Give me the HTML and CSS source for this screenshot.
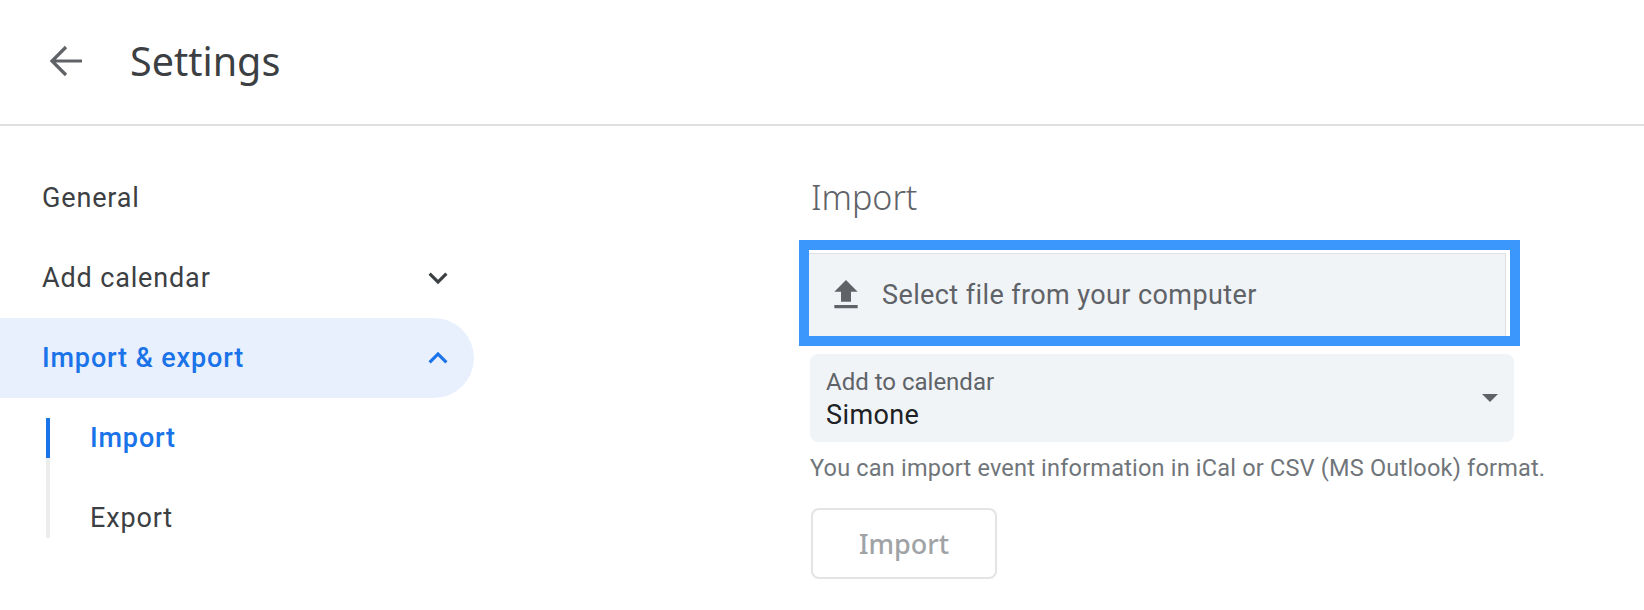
FILE: index.html
```html
<!DOCTYPE html>
<html lang="en">
<head>
<meta charset="utf-8">
<title>Settings</title>
<link rel="stylesheet" href="styles.css">
</head>
<body>
<header class="topbar">
  <svg class="back" viewBox="0 0 36 36"><path d="M34 18H4M18 4 4 18l14 14"/></svg>
  <h1 class="title">Settings</h1>
</header>
<main class="layout">
  <nav class="nav">
    <div class="nav-item">General</div>
    <div class="nav-item">Add calendar
      <svg class="chev" viewBox="0 0 24 24"><path d="M7.41 8.59 12 13.17l4.59-4.58L18 10l-6 6-6-6z"/></svg>
    </div>
    <div class="nav-item active">Import &amp; export
      <svg class="chev" viewBox="0 0 24 24"><path d="M7.41 15.41 12 10.83l4.59 4.58L18 14l-6-6-6 6z"/></svg>
    </div>
    <div class="sub">
      <div class="sub-item current">Import</div>
      <div class="sub-item">Export</div>
    </div>
  </nav>
  <section class="content">
    <h2 class="heading">Import</h2>
    <div class="highlight">
      <div class="file">
        <svg class="upload" viewBox="0 0 24 24"><path d="M9 16h6v-6h4l-7-7-7 7h4v6zm-4 2h14v2H5v-2z"/></svg>
        <span>Select file from your computer</span>
      </div>
    </div>
    <div class="select">
      <div class="select-text">
        <div class="select-label">Add to calendar</div>
        <div class="select-value">Simone</div>
      </div>
      <span class="caret"></span>
    </div>
    <p class="help">You can import event information in iCal or CSV (MS Outlook) format.</p>
    <button class="btn" type="button" disabled>Import</button>
  </section>
</main>
</body>
</html>
```
FILE: styles.css
```css
* { box-sizing: border-box; }
html, body { margin: 0; height: 100%; background: #fff; overflow: hidden; }
body { font-family: Roboto, "Liberation Sans", sans-serif; color: #3c4043; }
.topbar { display: flex; align-items: center; height: 126px; border-bottom: 2px solid #dfe0e2; padding: 0 0 2px 48px; }
.back { width: 36px; height: 36px; fill: none; stroke: #5f6368; stroke-width: 3.2; }
.title { margin: 0 0 0 46px; font-size: 39.5px; font-weight: 400; font-family: "Noto Sans", Roboto, sans-serif; color: #3c4043; }
.layout { display: flex; padding-top: 32px; }
.nav { width: 474px; flex: none; }
.nav-item { display: flex; align-items: center; justify-content: space-between; height: 80px; padding: 0 17px 0 42px; font-size: 27px; letter-spacing: 0.85px; border-radius: 0 40px 40px 0; color: #3c4043; }
.nav-item.active { background: #e8f0fe; color: #1a73e8; font-weight: 500; }
.chev { width: 38px; height: 38px; fill: #3c4043; }
.active .chev { fill: #1a73e8; }
.sub { margin: 20px 0 0 46px; border-left: 4px solid #eceded; height: 120px; }
.sub-item { height: 40px; margin-left: -4px; padding-left: 40px; font-size: 27px; letter-spacing: 0.85px; line-height: 40px; border-left: 4px solid transparent; color: #3c4043; }
.sub-item + .sub-item { margin-top: 40px; }
.sub-item.current { color: #1a73e8; font-weight: 500; border-left-color: #1a73e8; }
.content { margin-left: 325px; width: 760px; display: flex; flex-direction: column; align-items: flex-start; padding-top: 8px; }
.heading { margin: 9px 0 0 12px; font-size: 34px; line-height: 44px; font-weight: 300; font-family: "Noto Sans", Roboto, sans-serif; color: #5f6368; }
.highlight { margin-top: 21px; width: 721px; height: 106px; border: 10px solid #3b97fc; background: #fff; }
.file { display: flex; align-items: center; margin: 3px 4px 0 0; height: 83px; background: #f0f4f7; border-top: 1px solid #dde1e4; border-right: 1px solid #dde1e4; padding-left: 17px; font-size: 27px; letter-spacing: 0.4px; color: #5f6368; }
.upload { width: 40px; height: 40px; fill: #5f6368; flex: none; margin-right: 16px; }
.select { margin: 8px 0 0 11px; width: 704px; height: 88px; border-radius: 8px; background: #f0f4f7; display: flex; align-items: center; justify-content: space-between; padding: 7px 16px 0; }
.select-label { font-size: 24px; line-height: 28px; color: #5f6368; }
.select-value { font-size: 27px; letter-spacing: 0.4px; line-height: 39px; color: #202124; }
.caret { width: 0; height: 0; border-left: 8px solid transparent; border-right: 8px solid transparent; border-top: 8px solid #5f6368; margin-bottom: 7px; }
.help { margin: 10px 0 0 11px; font-size: 23.5px; letter-spacing: 0.2px; line-height: 32px; color: #70757a; white-space: nowrap; }
.btn { margin: 24px 0 0 12px; width: 186px; height: 71px; background: #fff; border: 2px solid #e3e4e6; border-radius: 8px; font-family: "Noto Sans", Roboto, sans-serif; font-size: 27px; font-weight: 500; color: #a0a3a6; padding: 0; }
```
